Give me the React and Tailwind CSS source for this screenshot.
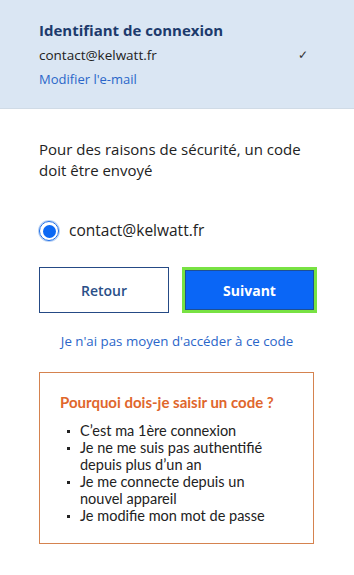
export default function App() {
  const items = [
    "C\u2019est ma 1ère connexion",
    "Je ne me suis pas authentifié depuis plus d\u2019un an",
    "Je me connecte depuis un nouvel appareil",
    "Je modifie mon mot de passe",
  ];
  return (
    <div className="w-[354px] min-h-[575px] bg-white font-['Open_Sans',_'Lato',_sans-serif] text-[#222]">
      <div className="bg-[#dae6f3] pl-[39px] pr-[37px] pt-[20px] pb-[19px] border-b border-[#d0dbe6]">
        <div className="text-[15px] leading-[20px] font-bold text-[#1c3a6c]">Identifiant de connexion</div>
        <div className="mt-[5px] flex items-center justify-between leading-[20px]">
          <span className="text-[13.5px] text-[#222]">contact@kelwatt.fr</span>
          <span className="text-[12px] text-[#333] mr-[9px]">✓</span>
        </div>
        <div className="mt-[4px] text-[13px] leading-[20px] text-[#2a66c9]">Modifier l&apos;e-mail</div>
      </div>

      <div className="pl-[39px] pr-[37px] pt-[30px]">
        <p className="text-[15px] leading-[21px] text-[#222]">
          Pour des raisons de sécurité, un code doit être envoyé
        </p>

        <div className="mt-[40px] flex items-center gap-[10px] h-[20px]">
          <div className="w-[20px] h-[20px] rounded-full border-[1.5px] border-[#1d6de6] flex items-center justify-center shadow-[0_0_0_1px_#bcd4f5]">
            <div className="w-[13px] h-[13px] rounded-full bg-[#0b68f4]" />
          </div>
          <span className="text-[15.5px] text-[#222]">contact@kelwatt.fr</span>
        </div>

        <div className="mt-[26px] flex gap-[13px]">
          <button className="w-[130px] h-[46px] border border-[#254a85] text-[14px] font-semibold text-[#2a4f88] bg-white">
            Retour
          </button>
          <button className="w-[135px] h-[46px] border-[3px] border-[#78e243] bg-[#0a66f6] text-[14px] font-bold text-white shadow-[inset_0_0_0_1px_#1d4f96]">
            Suivant
          </button>
        </div>

        <div className="mt-[18px] text-center text-[13.3px] leading-[20px] text-[#2a66c9] pr-[2px]">
          Je n&apos;ai pas moyen d&apos;accéder à ce code
        </div>

        <div className="mt-[21px] w-[275px] border border-[#d5834f] pl-[20px] pr-[34px] pt-[19px] pb-[19px] font-['Lato',_sans-serif]">
          <div className="text-[15px] leading-[20px] font-bold text-[#e0662c]">Pourquoi dois-je saisir un code ?</div>
          <ul className="mt-[10px]">
            {items.map((t) => (
              <li key={t} className="flex text-[14.5px] leading-[17px] text-[#222]">
                <span className="w-[3px] h-[3px] bg-[#222] mt-[8px] ml-[7px] mr-[10px] shrink-0" />
                <span>{t}</span>
              </li>
            ))}
          </ul>
        </div>
      </div>
    </div>
  );
}
